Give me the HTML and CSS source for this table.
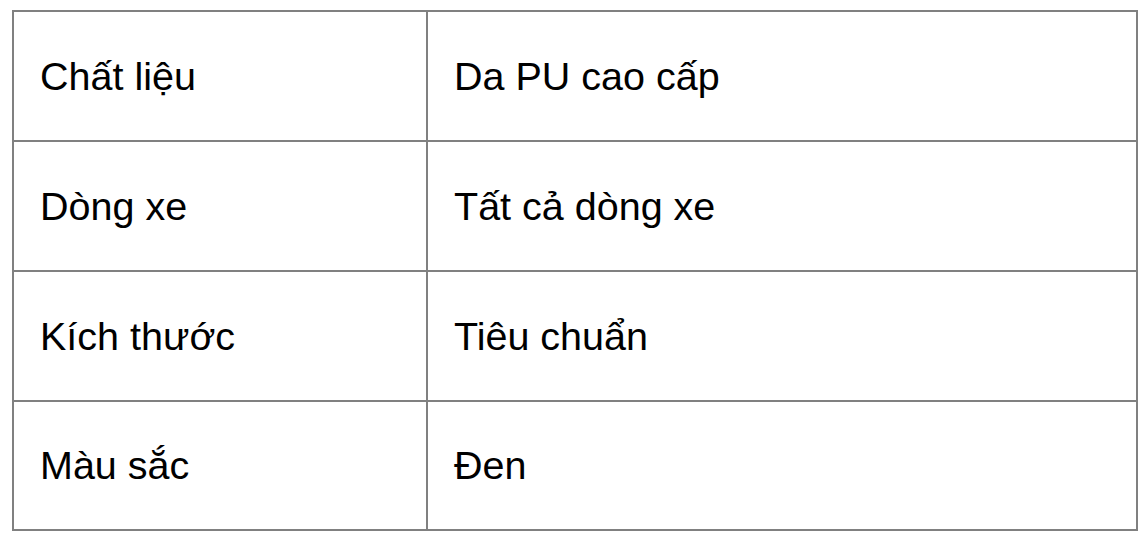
FILE: index.html
```html
<!DOCTYPE html>
<html lang="vi">
<head>
<meta charset="utf-8">
<title>Thông số sản phẩm</title>
<link rel="stylesheet" href="styles.css">
</head>
<body>
<table class="spec">
  <tbody>
    <tr class="row"><td class="label">Chất liệu</td><td class="value">Da PU cao cấp</td></tr>
    <tr class="row"><td class="label">Dòng xe</td><td class="value">Tất cả dòng xe</td></tr>
    <tr class="row"><td class="label">Kích thước</td><td class="value">Tiêu chuẩn</td></tr>
    <tr class="row last"><td class="label">Màu sắc</td><td class="value">Đen</td></tr>
  </tbody>
</table>
</body>
</html>
```
FILE: styles.css
```css
html, body {
  margin: 0;
  padding: 0;
  background: #ffffff;
}
body {
  padding: 10px 10px 0 12px;
  font-family: "Liberation Sans", Arial, sans-serif;
  color: #000000;
}
.spec {
  width: 1126px;
  border-collapse: separate;
  border-spacing: 0;
  border-top: 2px solid #808080;
  border-left: 2px solid #808080;
  table-layout: fixed;
}
.spec td {
  border-right: 2px solid #808080;
  border-bottom: 2px solid #808080;
  padding: 0 0 0 26px;
  height: 128px;
  vertical-align: middle;
  font-size: 39.5px;
  line-height: 45px;
}
.spec .last td {
  height: 127px;
}
.spec .label {
  width: 386px;
}
```
